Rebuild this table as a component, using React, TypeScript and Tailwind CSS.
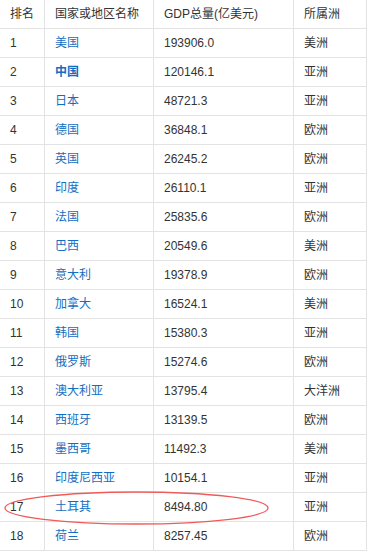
import React from 'react';

type Row = { rank: number; name: string; gdp: string; region: string; bold?: boolean };

const rows: Row[] = [
  { rank: 1, name: '美国', gdp: '193906.0', region: '美洲' },
  { rank: 2, name: '中国', gdp: '120146.1', region: '亚洲', bold: true },
  { rank: 3, name: '日本', gdp: '48721.3', region: '亚洲' },
  { rank: 4, name: '德国', gdp: '36848.1', region: '欧洲' },
  { rank: 5, name: '英国', gdp: '26245.2', region: '欧洲' },
  { rank: 6, name: '印度', gdp: '26110.1', region: '亚洲' },
  { rank: 7, name: '法国', gdp: '25835.6', region: '欧洲' },
  { rank: 8, name: '巴西', gdp: '20549.6', region: '美洲' },
  { rank: 9, name: '意大利', gdp: '19378.9', region: '欧洲' },
  { rank: 10, name: '加拿大', gdp: '16524.1', region: '美洲' },
  { rank: 11, name: '韩国', gdp: '15380.3', region: '亚洲' },
  { rank: 12, name: '俄罗斯', gdp: '15274.6', region: '欧洲' },
  { rank: 13, name: '澳大利亚', gdp: '13795.4', region: '大洋洲' },
  { rank: 14, name: '西班牙', gdp: '13139.5', region: '欧洲' },
  { rank: 15, name: '墨西哥', gdp: '11492.3', region: '美洲' },
  { rank: 16, name: '印度尼西亚', gdp: '10154.1', region: '亚洲' },
  { rank: 17, name: '土耳其', gdp: '8494.80', region: '亚洲' },
  { rank: 18, name: '荷兰', gdp: '8257.45', region: '欧洲' },
];

const cell = 'h-[29px] flex items-center pl-[10px] border-r border-b border-[#e3e3e3]';

export default function App() {
  return (
    <div
      className="relative w-[368px] h-[551px] bg-white text-[12px] text-[#333] overflow-hidden"
      style={{ fontFamily: '"Liberation Sans", Arial, "Noto Sans CJK SC", sans-serif' }}
    >
      <div className="flex">
        <div className={`${cell} w-[45px]`}>排名</div>
        <div className={`${cell} w-[109px]`}>国家或地区名称</div>
        <div className={`${cell} w-[140px]`}>GDP总量(亿美元)</div>
        <div className={`${cell} w-[73px]`}>所属洲</div>
      </div>
      {rows.map((r) => (
        <div key={r.rank} className="flex">
          <div className={`${cell} w-[45px]`}>{r.rank}</div>
          <div className={`${cell} w-[109px] text-[#136ec2] ${r.bold ? 'font-bold' : ''}`}>{r.name}</div>
          <div className={`${cell} w-[140px]`}>{r.gdp}</div>
          <div className={`${cell} w-[73px]`}>{r.region}</div>
        </div>
      ))}
      {/* red circle marking 土耳其 */}
      <svg className="absolute left-0 top-0 pointer-events-none" width="368" height="551">
        <ellipse cx="136.5" cy="508" rx="131.5" ry="16" fill="none" stroke="#f05a5a" strokeWidth="1.3" />
      </svg>
    </div>
  );
}
